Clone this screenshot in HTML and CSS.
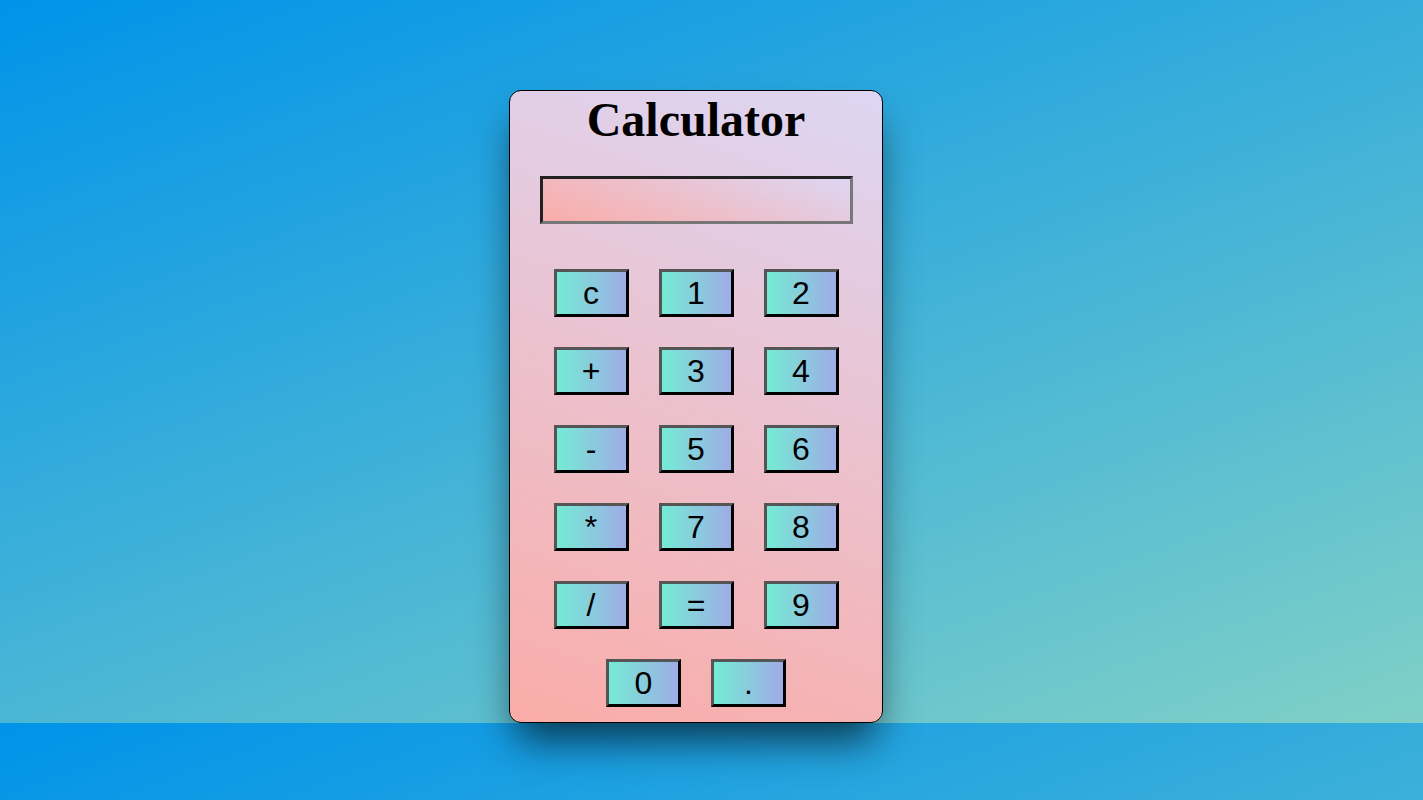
FILE: index.html
```html
<!DOCTYPE html>
<html lang="en">
<head>
<meta charset="utf-8">
<title>Calculator</title>
<link rel="stylesheet" href="styles.css">
</head>
<body>
<div class="calculator">
  <h1 class="title">Calculator</h1>
  <input class="display" type="text" readonly>
  <div class="keys">
    <button class="key">c</button>
    <button class="key">1</button>
    <button class="key">2</button>
    <button class="key">+</button>
    <button class="key">3</button>
    <button class="key">4</button>
    <button class="key">-</button>
    <button class="key">5</button>
    <button class="key">6</button>
    <button class="key">*</button>
    <button class="key">7</button>
    <button class="key">8</button>
    <button class="key">/</button>
    <button class="key">=</button>
    <button class="key">9</button>
  </div>
  <div class="last-row">
    <button class="key">0</button>
    <button class="key">.</button>
  </div>
</div>
</body>
</html>
```
FILE: styles.css
```css
html {
  background-color: #0093E9;
  background-image: linear-gradient(160deg, #0093E9 0%, #80D0C7 100%);
  background-size: 100% 723px;
  background-repeat: repeat;
}

body {
  box-sizing: border-box;
  min-height: 100vh;
  margin: 0;
  padding: 90px 31px 0 0;
  font-family: "Liberation Serif", "Times New Roman", serif;
}

.calculator {
  box-sizing: border-box;
  width: 374px;
  height: 633px;
  margin: 0 auto;
  border: 1px solid #000;
  border-radius: 12px;
  background-image: linear-gradient(19deg, #FAACA8 0%, #DDD6F3 100%);
  box-shadow: 0 25px 40px -8px rgba(0, 0, 0, 0.65);
  display: flex;
  flex-direction: column;
  align-items: center;
}

.title {
  margin: 2px 0 0;
  font-size: 48px;
  font-weight: bold;
  line-height: 53px;
  color: #000;
}

.display {
  box-sizing: border-box;
  width: 313px;
  height: 48px;
  margin: 30px 0 0 1px;
  border: 3px solid;
  border-color: #222 #777 #777 #222;
  background-image: linear-gradient(19deg, #FAACA8 0%, #DDD6F3 100%);
  padding: 0;
  outline: none;
}

.keys {
  margin-top: 45px;
  display: grid;
  grid-template-columns: repeat(3, 75px);
  grid-auto-rows: 48px;
  column-gap: 30px;
  row-gap: 30px;
}

.last-row {
  margin-top: 30px;
  display: flex;
  gap: 30px;
}

.key {
  box-sizing: border-box;
  width: 75px;
  height: 48px;
  padding: 0;
  border: 3px solid;
  border-color: #555 #000 #000 #555;
  background-image: linear-gradient(90deg, #74EBD5 0%, #9FACE6 100%);
  font-family: "Liberation Sans", Arial, sans-serif;
  font-size: 32px;
  line-height: 40px;
  color: #000;
  cursor: pointer;
}
```
